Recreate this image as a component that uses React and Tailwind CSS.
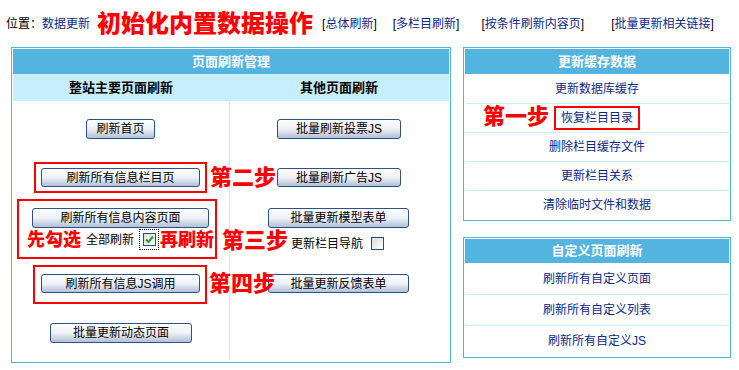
import React from "react";

const font = { fontFamily: '"Liberation Sans", "Noto Sans CJK SC", sans-serif' };

const Btn = ({ children, className = "" }) => (
  <div
    className={`flex items-center justify-center rounded-[3px] border border-[#2f5286] bg-linear-to-b from-white via-[#eef1f7] to-[#b4c0d6] text-[12px] leading-none text-black ${className}`}
  >
    {children}
  </div>
);

const Mark = ({ children, className = "" }) => (
  <span className={`font-black leading-none text-[#ff0000] ${className}`}>{children}</span>
);

const Link = ({ children, className = "" }) => (
  <span className={`text-[12px] text-black ${className}`}>
    [<span className="text-[#0c2a86]">{children}</span>]
  </span>
);

const PanelHead = ({ children, className = "h-[25px]" }) => (
  <div className={`flex items-center justify-center bg-[#52b4df] text-[13px] font-bold text-white ${className}`}>
    {children}
  </div>
);

const Row = ({ children, first, h = "h-[29px]" }) => (
  <div className={`flex items-center justify-center text-[12px] text-[#0c2a86] ${h} ${first ? "" : "border-t border-[#c6eefc]"}`}>
    {children}
  </div>
);

export default function App() {
  return (
    <div className="relative h-[370px] w-[739px] overflow-hidden bg-white" style={font}>
      {/* top bar */}
      <div className="flex h-[47px] items-center pl-[6px]">
        <span className="text-[12px] text-black">位置：</span>
        <span className="text-[12px] text-[#0c2a86]">数据更新</span>
        <Mark className="ml-[7px] text-[24px]">初始化内置数据操作</Mark>
        <Link className="ml-[9px]">总体刷新</Link>
        <Link className="ml-[16px]">多栏目刷新</Link>
        <Link className="ml-[22px]">按条件刷新内容页</Link>
        <Link className="ml-[27px]">批量更新相关链接</Link>
      </div>

      <div className="flex items-start pl-[11px]">
        {/* left panel */}
        <div className="h-[316px] w-[440px] border border-[#52b4df] p-px">
          <PanelHead>页面刷新管理</PanelHead>
          <div className="flex h-[27px] bg-[#c6eefc] text-[13px] font-bold text-black">
            <div className="flex w-[216px] items-center justify-center">整站主要页面刷新</div>
            <div className="flex w-[220px] items-center justify-center">其他页面刷新</div>
          </div>
          <div className="flex h-[259px]">
            {/* left column */}
            <div className="flex w-[216px] flex-col">
              <Btn className="ml-[73px] mt-[18px] h-[20px] w-[69px]">刷新首页</Btn>
              <div className="ml-[21px] mt-[23px] flex h-[31px] w-[173px] items-center border-2 border-[#ff0000] pl-[5px]">
                <Btn className="h-[19px] w-[159px]">刷新所有信息栏目页</Btn>
              </div>
              <div className="ml-[4px] mt-[6px] h-[60px] w-[200px] border-2 border-[#ff0000] pt-[7px]">
                <Btn className="ml-[13px] h-[20px] w-[177px]">刷新所有信息内容页面</Btn>
                <div className="mt-px flex h-[21px] items-center">
                  <Mark className="ml-[8px] text-[18px]">先勾选</Mark>
                  <span className="ml-[5px] text-[12px] text-black">全部刷新</span>
                  <span className="ml-[5px] flex h-[21px] w-[20px] items-center justify-center border border-dotted border-black">
                    <span className="flex h-[13px] w-[13px] items-center justify-center border border-[#1c5180] bg-linear-to-br from-[#dcdcd7] to-white">
                      <svg width="9" height="9" viewBox="0 0 9 9">
                        <path d="M1 4.5 L3.5 7 L8 1.5" fill="none" stroke="#21a121" strokeWidth="2" />
                      </svg>
                    </span>
                  </span>
                  <Mark className="ml-px text-[18px]">再刷新</Mark>
                </div>
              </div>
              <div className="ml-[20px] mt-[6px] h-[39px] w-[174px] border-2 border-[#ff0000] pl-[6px] pt-[7px]">
                <Btn className="h-[19px] w-[159px]">刷新所有信息JS调用</Btn>
              </div>
              <Btn className="ml-[37px] mt-[19px] h-[20px] w-[142px]">批量更新动态页面</Btn>
            </div>
            <div className="w-px bg-[#c6eefc]" />
            {/* right column */}
            <div className="flex w-[219px] flex-col">
              <Btn className="ml-[47px] mt-[18px] h-[20px] w-[124px]">批量刷新投票JS</Btn>
              <Btn className="ml-[47px] mt-[29px] h-[19px] w-[124px]">批量刷新广告JS</Btn>
              <Btn className="ml-[38px] mt-[21px] h-[20px] w-[141px]">批量更新模型表单</Btn>
              <div className="mt-[9px] flex h-[13px] items-center">
                <span className="ml-[61px] text-[12px] leading-none text-black">更新栏目导航</span>
                <span className="ml-[8px] h-[13px] w-[13px] border border-[#1c5180] bg-linear-to-br from-[#dcdcd7] to-white" />
              </div>
              <Btn className="ml-[38px] mt-[24px] h-[19px] w-[141px]">批量更新反馈表单</Btn>
            </div>
          </div>
        </div>

        {/* right panels */}
        <div className="ml-[12px] flex flex-col">
          <div className="h-[174px] w-[268px] border border-[#52b4df] p-px">
            <PanelHead>更新缓存数据</PanelHead>
            <Row first>更新数据库缓存</Row>
            <Row>
              <span className="flex h-[24px] items-center border-2 border-[#ff0000] px-[5px]">恢复栏目目录</span>
            </Row>
            <Row>删除栏目缓存文件</Row>
            <Row>更新栏目关系</Row>
            <Row h="h-[28px]">清除临时文件和数据</Row>
          </div>
          <div className="mt-[16px] h-[121px] w-[268px] border border-[#52b4df] p-px">
            <PanelHead className="h-[24px]">自定义页面刷新</PanelHead>
            <Row first h="h-[31px]">刷新所有自定义页面</Row>
            <Row h="h-[31px]">刷新所有自定义列表</Row>
            <Row h="h-[30px]">刷新所有自定义JS</Row>
          </div>
        </div>
      </div>

      {/* step annotations overlaying the panels */}
      <Mark className="absolute left-[483px] top-[106px] text-[22px]">第一步</Mark>
      <Mark className="absolute left-[210px] top-[167px] text-[22px]">第二步</Mark>
      <Mark className="absolute left-[222px] top-[230px] text-[22px]">第三步</Mark>
      <Mark className="absolute left-[209px] top-[273px] text-[22px]">第四步</Mark>
    </div>
  );
}
